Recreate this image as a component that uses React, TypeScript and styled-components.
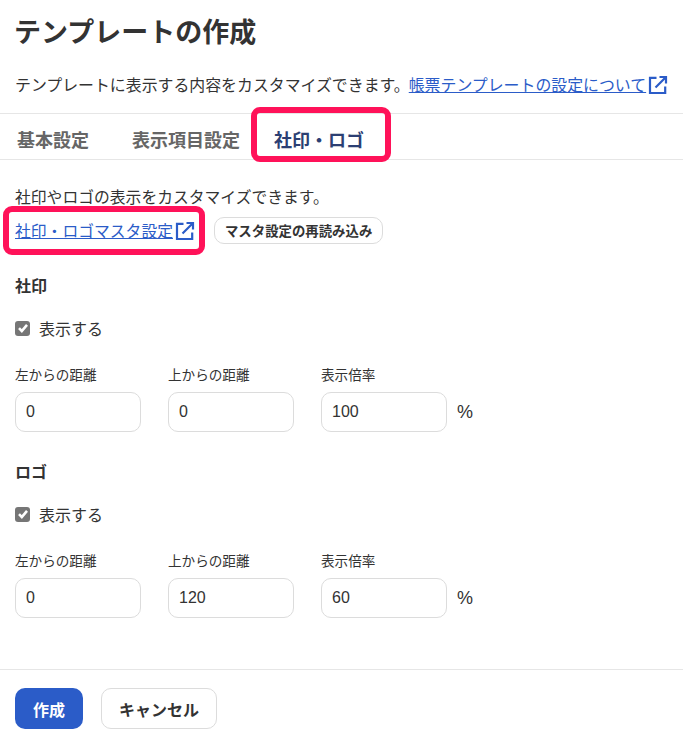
import React from "react";
import styled, { createGlobalStyle } from "styled-components";

const GlobalStyle = createGlobalStyle`
  html, body {
    margin: 0;
    padding: 0;
    background: #fff;
  }
  body {
    font-family: "Noto Sans CJK JP", "Liberation Sans", sans-serif;
    color: #333;
  }
`;

const ExternalIcon = () => (
  <LinkIcon viewBox="0 0 20 20" fill="none" stroke="currentColor" strokeWidth="2.2">
    <path d="M8.5 2.8H2v15.2h15.2v-6.5" />
    <path d="M7.5 12.5L17 3M11.5 2H18v6.5" />
  </LinkIcon>
);

const CheckRow = () => (
  <CheckLabel>
    <CheckBox>
      <svg viewBox="0 0 14 14" width="14" height="14" fill="none" stroke="#fff" strokeWidth="2.6">
        <path d="M3 7.2l2.8 2.8L11 3.8" />
      </svg>
    </CheckBox>
    表示する
  </CheckLabel>
);

type FieldData = { label: string; value: string };

const Fields = ({ items }: { items: FieldData[] }) => (
  <FieldRow>
    {items.map((f) => (
      <Field key={f.label}>
        <FieldLabel>{f.label}</FieldLabel>
        <Input readOnly value={f.value} />
      </Field>
    ))}
    <Percent>%</Percent>
  </FieldRow>
);

export default function App() {
  return (
    <Page>
      <GlobalStyle />
      <Title>テンプレートの作成</Title>
      <Lead>
        テンプレートに表示する内容をカスタマイズできます。
        <LeadLink href="#">帳票テンプレートの設定について</LeadLink>
        <ExternalIcon />
      </Lead>
      <Tabs>
        <Tab>基本設定</Tab>
        <Tab>表示項目設定</Tab>
        <ActiveTab>社印・ロゴ</ActiveTab>
      </Tabs>
      <Body>
        <Note>社印やロゴの表示をカスタマイズできます。</Note>
        <MasterRow>
          <MasterHighlight>
            <DocLink href="#">社印・ロゴマスタ設定</DocLink>
            <ExternalIcon />
          </MasterHighlight>
          <ReloadButton>マスタ設定の再読み込み</ReloadButton>
        </MasterRow>
        <Section>
          <SectionTitle>社印</SectionTitle>
          <CheckRow />
          <Fields
            items={[
              { label: "左からの距離", value: "0" },
              { label: "上からの距離", value: "0" },
              { label: "表示倍率", value: "100" },
            ]}
          />
        </Section>
        <Section>
          <SectionTitle>ロゴ</SectionTitle>
          <CheckRow />
          <Fields
            items={[
              { label: "左からの距離", value: "0" },
              { label: "上からの距離", value: "120" },
              { label: "表示倍率", value: "60" },
            ]}
          />
        </Section>
      </Body>
      <Footer>
        <PrimaryButton>作成</PrimaryButton>
        <CancelButton>キャンセル</CancelButton>
      </Footer>
    </Page>
  );
}

const Page = styled.div`
  width: 683px;
  height: 745px;
  overflow: hidden;
  display: flex;
  flex-direction: column;
`;

const Title = styled.h1`
  margin: 0;
  padding: 11px 14px 0;
  height: 53px;
  box-sizing: border-box;
  font-size: 27px;
  line-height: 40px;
  font-weight: 700;
  color: #333;
`;

const Lead = styled.p`
  margin: 0;
  padding: 2px 15px 0;
  height: 60px;
  display: flex;
  align-items: center;
  box-sizing: border-box;
  font-size: 15.9px;
  white-space: nowrap;
`;

const DocLink = styled.a`
  color: #2b5cc8;
  text-decoration: underline;
`;

const LeadLink = styled(DocLink)`
  margin-left: -1px;
`;

const LinkIcon = styled.svg`
  width: 20px;
  height: 20px;
  margin: 1px 0 0 2px;
  color: #2b5cc8;
  flex: none;
`;

const Tabs = styled.div`
  height: 47px;
  box-sizing: border-box;
  border-top: 1px solid #e6e6e6;
  border-bottom: 1px solid #e6e6e6;
  display: flex;
  align-items: center;
  padding-left: 17px;
  gap: 43px;
`;

const Tab = styled.div`
  font-size: 18px;
  font-weight: 700;
  color: #666;
  line-height: 46px;
  padding-top: 5px;
`;

const ActiveTab = styled(Tab)`
  color: #2c3f73;
  position: relative;
  margin-left: -9px;
  &::after {
    content: "";
    position: absolute;
    left: -23px;
    right: -27px;
    top: -4px;
    height: 55px;
    box-sizing: border-box;
    border: 6px solid #ff1259;
    border-radius: 9px;
  }
`;

const Body = styled.div`
  flex: 1;
  padding: 0 15px;
`;

const Note = styled.p`
  margin: 25px 0 0;
  font-size: 15.8px;
  line-height: 24px;
`;

const MasterRow = styled.div`
  display: flex;
  align-items: center;
  margin-top: 7px;
  height: 28px;
  gap: 19px;
`;

const MasterHighlight = styled.div`
  display: flex;
  align-items: center;
  font-size: 15.8px;
  position: relative;
  white-space: nowrap;
  &::after {
    content: "";
    position: absolute;
    left: -12px;
    right: -10px;
    top: -13px;
    bottom: -13px;
    box-sizing: border-box;
    border: 6px solid #ff1259;
    border-radius: 9px;
  }
`;

const ReloadButton = styled.button`
  height: 27px;
  padding: 0 10px;
  background: #fff;
  border: 1px solid #dcdcdc;
  border-radius: 10px;
  font: 700 13.4px "Noto Sans CJK JP", sans-serif;
  color: #333;
  white-space: nowrap;
`;

const Section = styled.section`
  margin-top: 29px;
  & + & {
    margin-top: 27px;
  }
`;

const SectionTitle = styled.h2`
  margin: 0;
  font-size: 16px;
  line-height: 24px;
  font-weight: 700;
`;

const CheckLabel = styled.label`
  display: flex;
  align-items: center;
  gap: 9px;
  margin-top: 19px;
  height: 24px;
  font-size: 16px;
`;

const CheckBox = styled.span`
  width: 15px;
  height: 15px;
  background: #767676;
  border-radius: 3px;
  display: flex;
  align-items: center;
  justify-content: center;
`;

const FieldRow = styled.div`
  display: flex;
  align-items: flex-end;
  gap: 27px;
  margin-top: 24px;
`;

const Field = styled.div`
  display: flex;
  flex-direction: column;
  gap: 8px;
`;

const FieldLabel = styled.span`
  font-size: 13.6px;
  line-height: 20px;
`;

const Input = styled.input`
  width: 126px;
  height: 40px;
  box-sizing: border-box;
  padding: 0 10px;
  border: 1px solid #dcdcdc;
  border-radius: 10px;
  font: 16px "Liberation Sans", sans-serif;
  color: #333;
  outline: none;
`;

const Percent = styled.span`
  font: 18px/40px "Liberation Sans", sans-serif;
  margin-left: -17px;
`;

const Footer = styled.footer`
  height: 76px;
  box-sizing: border-box;
  border-top: 1px solid #e6e6e6;
  display: flex;
  align-items: flex-start;
  gap: 18px;
  padding: 18px 15px 0;
`;

const PrimaryButton = styled.button`
  width: 68px;
  height: 41px;
  background: #2b5cc8;
  border: none;
  border-radius: 10px;
  color: #fff;
  font: 700 16px "Noto Sans CJK JP", sans-serif;
`;

const CancelButton = styled.button`
  width: 116px;
  height: 41px;
  background: #fff;
  border: 1px solid #dcdcdc;
  border-radius: 10px;
  color: #333;
  font: 700 16px "Noto Sans CJK JP", sans-serif;
`;
